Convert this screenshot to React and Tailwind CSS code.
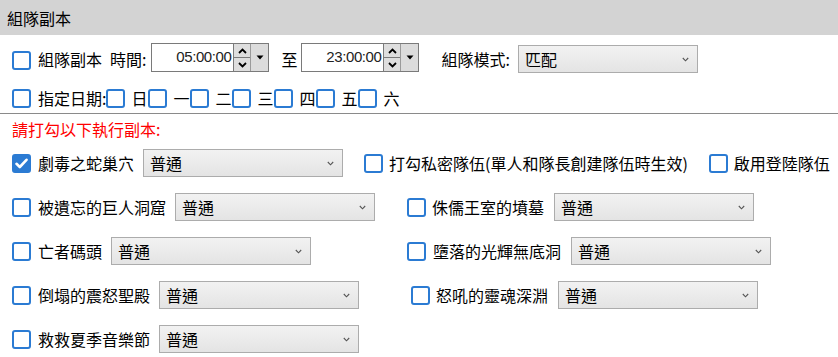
const Check = ({ checked = false, className = "" }) => (
  <div
    className={`w-[19px] h-[19px] shrink-0 rounded-[3px] border-2 border-[#2b7bd3] flex items-center justify-center ${
      checked ? "bg-[#2b7bd3]" : "bg-white"
    } ${className}`}
  >
    {checked && (
      <svg width="13" height="11" viewBox="0 0 13 11">
        <path d="M1.5 5.8 L4.8 9 L11.5 1.8" fill="none" stroke="#fff" strokeWidth="2.6" strokeLinecap="round" strokeLinejoin="round" />
      </svg>
    )}
  </div>
);

const Select = ({ value = "普通", w = "w-[200px]" }) => (
  <div className={`${w} h-[28px] shrink-0 border border-[#acacac] bg-gradient-to-b from-[#f2f2f2] to-[#e4e4e4] flex items-center justify-between pl-[6px] pr-[8px]`}>
    <span className="leading-[23px]">{value}</span>
    <svg width="7" height="5" viewBox="0 0 7 5">
      <path d="M0.8 1 L3.5 3.8 L6.2 1" fill="none" stroke="#555" strokeWidth="1.1" />
    </svg>
  </div>
);

const TimeBox = ({ value }) => (
  <div className="w-[118px] h-[29px] shrink-0 border border-[#7a7a7a] bg-white flex">
    <div className="flex-1 flex items-center justify-end pr-[2px] text-[15px] tracking-[-0.4px] text-[#222] font-['Liberation_Sans',sans-serif]">
      {value}
    </div>
    <div className="w-[17px] flex flex-col border-l border-[#7a7a7a]">
      <div className="flex-1 bg-[#dedede] border-b border-[#7a7a7a] flex items-center justify-center">
        <svg width="9" height="6" viewBox="0 0 9 6">
          <path d="M1 5 L4.5 1.5 L8 5" fill="none" stroke="#000" strokeWidth="1.8" />
        </svg>
      </div>
      <div className="flex-1 bg-[#dedede] flex items-center justify-center">
        <svg width="9" height="6" viewBox="0 0 9 6">
          <path d="M1 1 L4.5 4.5 L8 1" fill="none" stroke="#000" strokeWidth="1.8" />
        </svg>
      </div>
    </div>
    <div className="w-[18px] bg-[#dcdcdc] border-l border-[#9a9a9a] flex items-center justify-center">
      <svg width="8" height="5" viewBox="0 0 8 5">
        <path d="M0.5 0.5 L7.5 0.5 L4 4.5 Z" fill="#000" />
      </svg>
    </div>
  </div>
);

const Item = ({ label, checked, gap = "ml-[7px]" }) => (
  <div className="flex items-center">
    <Check checked={checked} />
    <span className={`${gap} leading-[23px] whitespace-nowrap`}>{label}</span>
  </div>
);

const days = ["日", "一", "二", "三", "四", "五", "六"];

export default function App() {
  return (
    <div className="w-[838px] h-[357px] bg-white text-black text-[16px] font-['Noto_Sans_CJK_TC','Noto_Sans_CJK_SC',sans-serif] overflow-hidden">
      <div className="h-[35px] bg-[#d3d3d3] px-[7px] pt-[1px] flex items-center">
        <span className="leading-[23px]">組隊副本</span>
      </div>

      <div className="flex items-start pl-[12px] mt-[8px] h-[30px]">
        <Check className="mt-[8px]" />
        <span className="ml-[7px] mt-[5px] leading-[23px]">組隊副本</span>
        <span className="ml-[8px] mt-[5px] leading-[23px]">時間:</span>
        <div className="ml-[5px]">
          <TimeBox value="05:00:00" />
        </div>
        <span className="ml-[12px] mt-[5px] leading-[23px]">至</span>
        <div className="ml-[4px]">
          <TimeBox value="23:00:00" />
        </div>
        <span className="ml-[22px] mt-[5px] leading-[23px]">組隊模式:</span>
        <div className="ml-[8px] mt-[2px]">
          <Select value="匹配" w="w-[180px]" />
        </div>
      </div>

      <div className="flex items-center pl-[12px] mt-[15px] h-[20px]">
        <Check />
        <span className="ml-[7px] leading-[23px]">指定日期:</span>
        {days.map((d) => (
          <div key={d} className="flex items-center">
            <Check />
            <span className="ml-[6px] w-[17px] leading-[23px]">{d}</span>
          </div>
        ))}
      </div>

      <div className="mt-[5px] h-px bg-[#8a8a8a]" />

      <div className="mt-[4px] pl-[12px] leading-[23px] text-[#ff0000]">請打勾以下執行副本:</div>

      <div className="mt-[8px] flex flex-col gap-[16px] pl-[12px]">
        <div className="flex items-center h-[28px]">
          <Item label="劇毒之蛇巢穴" checked />
          <div className="ml-[9px]">
            <Select />
          </div>
          <div className="ml-[21px]">
            <Item label="打勾私密隊伍(單人和隊長創建隊伍時生效)" gap="ml-[6px]" />
          </div>
          <div className="ml-[21px]">
            <Item label="啟用登陸隊伍" gap="ml-[6px]" />
          </div>
        </div>

        <div className="flex items-center h-[28px]">
          <div className="w-[395px] flex items-center">
            <Item label="被遺忘的巨人洞窟" />
            <div className="ml-[9px]">
              <Select />
            </div>
          </div>
          <Item label="侏儒王室的墳墓" gap="ml-[6px]" />
          <div className="ml-[10px]">
            <Select />
          </div>
        </div>

        <div className="flex items-center h-[28px]">
          <div className="w-[395px] flex items-center">
            <Item label="亡者碼頭" />
            <div className="ml-[9px]">
              <Select />
            </div>
          </div>
          <Item label="墮落的光輝無底洞" gap="ml-[7px]" />
          <div className="ml-[10px]">
            <Select />
          </div>
        </div>

        <div className="flex items-center h-[28px]">
          <div className="w-[399px] flex items-center">
            <Item label="倒塌的震怒聖殿" />
            <div className="ml-[9px]">
              <Select />
            </div>
          </div>
          <Item label="怒吼的靈魂深淵" gap="ml-[6px]" />
          <div className="ml-[10px]">
            <Select />
          </div>
        </div>

        <div className="flex items-center h-[28px]">
          <Item label="救救夏季音樂節" />
          <div className="ml-[9px]">
            <Select />
          </div>
        </div>
      </div>
    </div>
  );
}
